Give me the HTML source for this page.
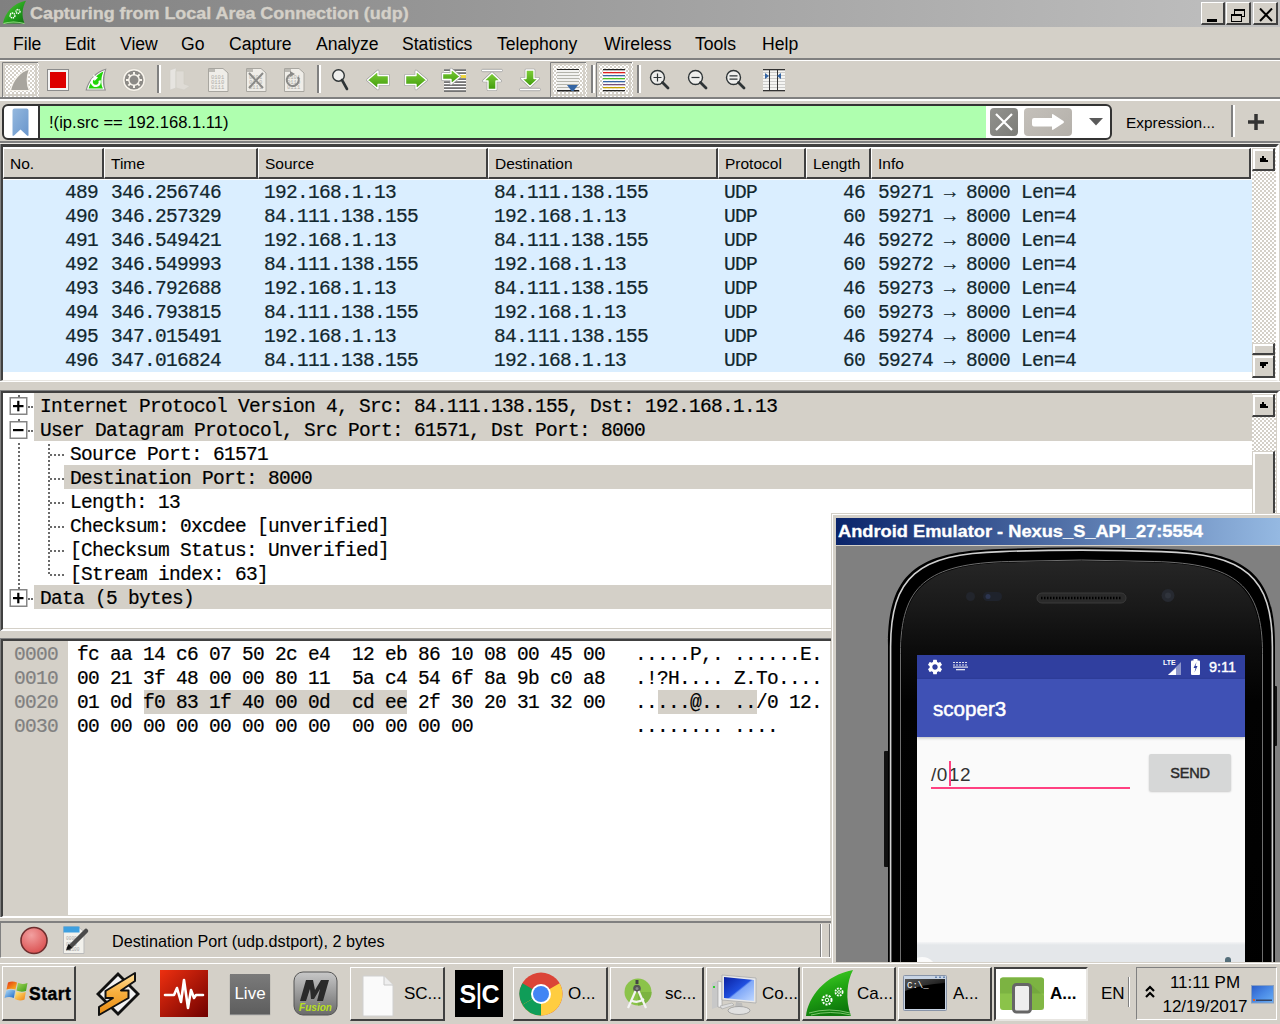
<!DOCTYPE html>
<html><head><meta charset="utf-8">
<style>
*{box-sizing:border-box;margin:0;padding:0}
html,body{width:1280px;height:1024px;overflow:hidden;background:#d4d0c8;font-family:"Liberation Sans",sans-serif;position:relative}
.a{position:absolute}
.mono{font-family:"Liberation Mono",monospace;font-size:19.5px;letter-spacing:-0.7px;white-space:pre;line-height:24px;padding-top:1px;-webkit-text-stroke:0.2px currentColor}
.sans{font-family:"Liberation Sans",sans-serif;white-space:pre}
.menu span{position:absolute;top:1px;font-size:17.6px;line-height:32px;color:#000}
.hdr{position:absolute;top:148px;height:31px;background:#d4d0c8;border-top:1px solid #fff;border-left:1px solid #fff;border-right:2px solid #404040;border-bottom:2px solid #404040;font-size:15.5px;line-height:30px;padding-left:6px;color:#000}
.row{position:absolute;left:3px;width:1249px;height:24px;background:#daeeff;color:#12272e}
.row span{position:absolute;top:1px}
.hl{background:#d4d0c8}
.check{background:repeating-conic-gradient(#d4d0c8 0% 25%,#fff 0% 50%) 0 0/4px 4px}
.sbtn{position:absolute;background:#d4d0c8;border-top:1px solid #d4d0c8;border-left:1px solid #d4d0c8;border-right:2px solid #404040;border-bottom:2px solid #404040;box-shadow:inset 2px 2px #fff}
.tb{position:absolute;background:#d4d0c8;border-top:1px solid #fff;border-left:1px solid #fff;border-right:2px solid #404040;border-bottom:2px solid #404040}
</style></head><body>

<!-- TITLE BAR -->
<div class="a" style="left:0;top:0;width:1280px;height:27px;background:linear-gradient(to right,#808080,#c0c0c0)"></div>
<div class="a sans" style="left:30px;top:0px;font-size:16px;font-weight:bold;line-height:27px;color:#d4d0c8;-webkit-text-stroke:0.35px #d4d0c8;transform-origin:0 0;transform:scaleX(1.12)">Capturing from Local Area Connection (udp)</div>
<!-- shark icon -->
<svg class="a" style="left:1px;top:0px" width="26" height="26" viewBox="0 0 26 26">
<defs><linearGradient id="sk" x1="0" y1="0" x2="1" y2="1"><stop offset="0" stop-color="#5cd23c"/><stop offset="0.6" stop-color="#1f9a1a"/><stop offset="1" stop-color="#0f6e10"/></linearGradient></defs>
<path d="M2 23.5 C4 13 12 3 25 0.8 C21 8 20.5 16 23.5 23.5 Z" fill="url(#sk)"/>
<path d="M2.5 23.5 Q12 20.5 23.5 23.5" stroke="#9be08a" stroke-width="1.2" fill="none"/>
<circle cx="11.5" cy="15.5" r="2.4" fill="none" stroke="#fff" stroke-width="1.5" stroke-dasharray="1.3 0.6"/>
<circle cx="17" cy="11.5" r="2" fill="none" stroke="#fff" stroke-width="1.4" stroke-dasharray="1.2 0.6"/>
</svg>
<!-- window buttons -->
<div class="tb" style="left:1201px;top:2px;width:24px;height:23px"><div class="a" style="left:5px;top:16px;width:10px;height:3px;background:#000"></div></div>
<div class="tb" style="left:1226px;top:2px;width:25px;height:23px">
 <div class="a" style="left:7px;top:6px;width:11px;height:8px;border:1px solid #000;border-top-width:2px"></div>
 <div class="a" style="left:4px;top:11px;width:11px;height:8px;border:1px solid #000;border-top-width:2px;background:#d4d0c8"></div>
</div>
<div class="tb" style="left:1253px;top:2px;width:25px;height:23px">
 <svg class="a" style="left:5px;top:5px" width="14" height="14" viewBox="0 0 14 14"><path d="M1 0.5 L13 13 M13 0.5 L1 13" stroke="#000" stroke-width="2"/></svg>
</div>
<!-- MENU -->
<div class="a menu" style="left:0;top:27px;width:1280px;height:32px">
<span style="left:13px">File</span><span style="left:65px">Edit</span><span style="left:120px">View</span><span style="left:181px">Go</span><span style="left:229px">Capture</span><span style="left:316px">Analyze</span><span style="left:402px">Statistics</span><span style="left:497px">Telephony</span><span style="left:604px">Wireless</span><span style="left:695px">Tools</span><span style="left:762px">Help</span>
</div>
<div class="a" style="left:0;top:58px;width:1280px;height:2px;background:#808080"></div>
<div class="a" style="left:0;top:60px;width:1280px;height:1px;background:#fff"></div>

<!-- TOOLBAR placeholder -->
<svg class="a" style="left:0;top:60px" width="800" height="38" viewBox="0 60 800 38">
<defs>
<pattern id="chk" width="4" height="4" patternUnits="userSpaceOnUse"><rect width="4" height="4" fill="#fff"/><rect width="2" height="2" fill="#d4d0c8"/><rect x="2" y="2" width="2" height="2" fill="#d4d0c8"/></pattern>
<linearGradient id="grn" x1="0" y1="0" x2="0" y2="1"><stop offset="0" stop-color="#7fcf3a"/><stop offset="1" stop-color="#3e9a0a"/></linearGradient>
</defs>
<!-- pressed button 1 -->
<rect x="2" y="62" width="37" height="35" fill="url(#chk)"/><path d="M4 64 H36 V95 H4 Z" fill="none" stroke="#d4d0c8" stroke-width="2"/><rect x="3" y="63" width="34" height="2" fill="#d4d0c8"/><rect x="3" y="63" width="2" height="32" fill="#d4d0c8"/><path d="M2.5 97 V62.5 H38" stroke="#808080" stroke-width="1" fill="none"/>
<path d="M10.5 90.5 C12.5 80 20 71.5 29.5 69 C27 75.5 26.5 84 29.5 90.5 Z" fill="#a8a59e" stroke="#f6f3ec" stroke-width="1.2"/>
<!-- red stop -->
<rect x="47.5" y="69.5" width="21" height="21" fill="#f4f4f4" stroke="#8c8c8c" stroke-width="1"/>
<rect x="50" y="72" width="16" height="16" fill="#dd0000"/>
<!-- green shark restart -->
<path d="M85.5 90.5 C88 80 96 71 106.5 68.5 C104 75 103.5 84 106 90.5 Z" fill="#8c8c8c"/>
<path d="M87 89.5 C89.5 80 97 72.5 105 70 C102.5 76 102 84 104.5 89.5 Z" fill="#fff"/>
<path d="M88.5 88.5 C91 80 97.5 74 103.5 71.5 C101 77 100.5 84 103 88.5 Z" fill="#22d40a"/>
<path d="M99.5 80.5 A4 4 0 1 1 95 78" stroke="#fff" stroke-width="2.2" fill="none"/>
<path d="M93 74.5 L98 77.5 L94.5 81 Z" fill="#fff"/>
<!-- gear -->
<circle cx="134" cy="80" r="10.4" fill="#8c8a86" stroke="#f8f4ec" stroke-width="1.8"/>
<circle cx="134" cy="80" r="11.5" fill="none" stroke="#c8c4bc" stroke-width="0.6"/>
<circle cx="134" cy="80" r="5.2" fill="none" stroke="#f8f4ec" stroke-width="1.5"/>
<g fill="#f8f4ec"><rect x="133" y="72" width="2" height="3" transform="rotate(0 134 80)"/><rect x="133" y="72" width="2" height="3" transform="rotate(45 134 80)"/><rect x="133" y="72" width="2" height="3" transform="rotate(90 134 80)"/><rect x="133" y="72" width="2" height="3" transform="rotate(135 134 80)"/><rect x="133" y="72" width="2" height="3" transform="rotate(180 134 80)"/><rect x="133" y="72" width="2" height="3" transform="rotate(225 134 80)"/><rect x="133" y="72" width="2" height="3" transform="rotate(270 134 80)"/><rect x="133" y="72" width="2" height="3" transform="rotate(315 134 80)"/></g>
<!-- separator -->
<rect x="157" y="65" width="2" height="28" fill="#808080"/><rect x="159" y="65" width="2" height="28" fill="#fff"/>
<!-- folder disabled -->
<path d="M170 70 L176 68 L176 88 L170 90 Z" fill="#e6e4e0" stroke="#d0cdc6" stroke-width="0.6"/>
<path d="M176 71 L184 71 L184 84 L190 86 L184 90 L176 88 Z" fill="#dedbd5" stroke="#cfccc5" stroke-width="0.6"/>
<!-- file icons disabled -->
<g stroke="#a8a6a0" stroke-width="1" fill="#efede8">
<path d="M208.5 68.5 H223 L228 73 V91.5 H208.5 Z"/>
<path d="M246.5 68.5 H261 L266 73 V91.5 H246.5 Z"/>
<path d="M284.5 68.5 H299 L304 73 V91.5 H284.5 Z"/>
</g>
<g fill="#bcbab4"><rect x="209" y="69" width="6" height="3"/><rect x="247" y="69" width="6" height="3"/><rect x="285" y="69" width="6" height="3"/></g>
<g font-family="Liberation Mono" font-size="5.5" fill="#b0aea8">
<text x="211" y="79">0101</text><text x="211" y="84">0110</text><text x="211" y="89">0111</text>
<text x="249" y="79">0101</text><text x="249" y="84">0110</text><text x="249" y="89">0111</text>
<text x="287" y="79">0101</text><text x="287" y="84">0110</text><text x="287" y="89">0111</text>
</g>
<path d="M249 73 L263 88 M263 73 L249 88" stroke="#8a8a88" stroke-width="2"/>
<path d="M298 77 A6 6 0 1 1 292 74" stroke="#8a8a88" stroke-width="2" fill="none"/>
<path d="M290 71 L295 74 L290 77 Z" fill="#8a8a88"/>
<!-- separator -->
<rect x="317" y="65" width="2" height="28" fill="#808080"/><rect x="319" y="65" width="2" height="28" fill="#fff"/>
<!-- magnifier -->
<circle cx="338.5" cy="75.5" r="5.8" fill="#eeeeec" stroke="#2e3436" stroke-width="1.4"/>
<path d="M342 80 L347 89" stroke="#2e3436" stroke-width="2.6" stroke-linecap="round"/>
<!-- left arrow -->
<path d="M367.5 80 L378 71 V75.5 H388.5 V84.5 H378 V89 Z" fill="none" stroke="#9a9a9a" stroke-width="2.6" stroke-linejoin="round"/><path d="M367.5 80 L378 71 V75.5 H388.5 V84.5 H378 V89 Z" fill="url(#grn)" stroke="#fff" stroke-width="1.4" stroke-linejoin="round"/>

<!-- right arrow -->
<path d="M426.5 80 L416 71 V75.5 H405.5 V84.5 H416 V89 Z" fill="none" stroke="#9a9a9a" stroke-width="2.6" stroke-linejoin="round"/><path d="M426.5 80 L416 71 V75.5 H405.5 V84.5 H416 V89 Z" fill="url(#grn)" stroke="#fff" stroke-width="1.4" stroke-linejoin="round"/>
<!-- goto packet -->
<rect x="444" y="69" width="22" height="23" fill="#fff"/><g fill="#1a1a1a"><rect x="444" y="69.5" width="22" height="1.1"/><rect x="444" y="72.5" width="22" height="1.1"/><rect x="444" y="75.5" width="22" height="1.1"/><rect x="444" y="78.5" width="22" height="1.1"/><rect x="444" y="81.5" width="22" height="1.1"/><rect x="444" y="84.5" width="22" height="1.1"/><rect x="444" y="87.5" width="22" height="1.1"/><rect x="444" y="90.5" width="22" height="1.1"/></g>
<rect x="458" y="75" width="8" height="3" fill="#f0d840"/>
<path d="M442.5 73.5 H451 V69 L460 76.5 L451 84 V79.5 H442.5 Z" fill="none" stroke="#9a9a9a" stroke-width="2.6" stroke-linejoin="round"/><path d="M442.5 73.5 H451 V69 L460 76.5 L451 84 V79.5 H442.5 Z" fill="url(#grn)" stroke="#fff" stroke-width="1.4" stroke-linejoin="round"/>
<!-- first -->
<rect x="481.5" y="69.3" width="21" height="2.4" rx="1.2" fill="#fff" stroke="#9a9a9a" stroke-width="0.8"/>
<path d="M492 73 L500.5 81 H496 V89.5 H488 V81 H483.5 Z" fill="none" stroke="#9a9a9a" stroke-width="2.6" stroke-linejoin="round"/><path d="M492 73 L500.5 81 H496 V89.5 H488 V81 H483.5 Z" fill="url(#grn)" stroke="#fff" stroke-width="1.4" stroke-linejoin="round"/>
<!-- last -->
<path d="M530 86.5 L538.5 78.5 H534 V70 H526 V78.5 H521.5 Z" fill="none" stroke="#9a9a9a" stroke-width="2.6" stroke-linejoin="round"/><path d="M530 86.5 L538.5 78.5 H534 V70 H526 V78.5 H521.5 Z" fill="url(#grn)" stroke="#fff" stroke-width="1.4" stroke-linejoin="round"/>
<rect x="519.5" y="88.3" width="21" height="2.4" rx="1.2" fill="#fff" stroke="#9a9a9a" stroke-width="0.8"/>
<!-- autoscroll pressed -->
<rect x="550" y="62" width="37" height="35" fill="url(#chk)"/><path d="M552 64 H584 V95 H552 Z" fill="none" stroke="#d4d0c8" stroke-width="2"/><rect x="551" y="63" width="34" height="2" fill="#d4d0c8"/><rect x="551" y="63" width="2" height="32" fill="#d4d0c8"/><path d="M550.5 97 V62.5 H586" stroke="#808080" stroke-width="1" fill="none"/>
<g fill="#222"><rect x="557" y="69" width="22" height="1.5"/><rect x="557" y="90" width="22" height="1.5"/></g>
<rect x="557" y="70" width="22" height="20" fill="#f2f2f0"/><g fill="#b4b4ac"><rect x="557" y="72" width="22" height="1"/><rect x="557" y="75" width="22" height="1"/><rect x="557" y="78" width="22" height="1"/><rect x="557" y="81" width="22" height="1"/><rect x="557" y="84" width="22" height="1"/><rect x="557" y="87" width="22" height="1"/></g>
<path d="M567 85 H578 L573.5 91 H571.5 Z" fill="#3465a4"/>
<!-- separator -->
<rect x="591" y="65" width="2" height="28" fill="#808080"/><rect x="593" y="65" width="2" height="28" fill="#fff"/>
<!-- colorize pressed -->
<rect x="596" y="62" width="37" height="35" fill="url(#chk)"/><path d="M598 64 H630 V95 H598 Z" fill="none" stroke="#d4d0c8" stroke-width="2"/><rect x="597" y="63" width="34" height="2" fill="#d4d0c8"/><rect x="597" y="63" width="2" height="32" fill="#d4d0c8"/><path d="M596.5 97 V62.5 H632" stroke="#808080" stroke-width="1" fill="none"/>
<rect x="603" y="70" width="22" height="20" fill="#fff" opacity="0.85"/><rect x="603" y="69" width="22" height="1.3" fill="#222"/>
<rect x="603" y="72" width="22" height="1.3" fill="#e02020"/>
<rect x="603" y="75" width="22" height="1.3" fill="#3465a4"/>
<rect x="603" y="78" width="22" height="1.3" fill="#4ec020"/>
<rect x="603" y="81" width="22" height="1.3" fill="#3465a4"/>
<rect x="603" y="84" width="22" height="1.3" fill="#75507b"/>
<rect x="603" y="87" width="22" height="1.3" fill="#c4a000"/>
<rect x="603" y="90" width="22" height="1.3" fill="#222"/>
<!-- separator -->
<rect x="637" y="65" width="2" height="28" fill="#808080"/><rect x="639" y="65" width="2" height="28" fill="#fff"/>
<!-- zooms -->
<g stroke="#2e3436">
<circle cx="657.5" cy="77.5" r="7" fill="#eeeeec" stroke-width="1.4"/>
<path d="M662.5 82.5 L668 88" stroke-width="2.8" stroke-linecap="round"/>
<path d="M653.5 77.5 H661.5 M657.5 73.5 V81.5" stroke-width="1.2"/>
<circle cx="695.5" cy="77.5" r="7" fill="#eeeeec" stroke-width="1.4"/>
<path d="M700.5 82.5 L706 88" stroke-width="2.8" stroke-linecap="round"/>
<path d="M691.5 77.5 H699.5" stroke-width="1.2"/>
<circle cx="733.5" cy="77.5" r="7" fill="#eeeeec" stroke-width="1.4"/>
<path d="M738.5 82.5 L744 88" stroke-width="2.8" stroke-linecap="round"/>
<path d="M729.5 75.8 H737.5 M729.5 79.2 H737.5" stroke-width="1.2"/>
</g>
<!-- resize columns -->
<g fill="#f4f4f2"><rect x="763" y="69" width="22" height="22"/></g>
<g fill="#bbb"><rect x="763" y="72" width="22" height="0.7"/><rect x="763" y="75" width="22" height="0.7"/><rect x="763" y="78" width="22" height="0.7"/><rect x="763" y="81" width="22" height="0.7"/><rect x="763" y="84" width="22" height="0.7"/><rect x="763" y="87" width="22" height="0.7"/></g>
<g fill="#333"><rect x="763" y="69" width="22" height="1.3"/><rect x="763" y="90" width="22" height="1.3"/><rect x="769" y="69" width="1" height="22"/><rect x="777" y="69" width="1" height="22"/></g>
<path d="M765 73 L769 76 L765 79 Z M781 73 L777 76 L781 79 Z" fill="#3465a4"/>
</svg>


<div class="a" style="left:0;top:97px;width:1280px;height:2px;background:#808080"></div>
<div class="a" style="left:0;top:99px;width:1280px;height:2px;background:#fff"></div>

<!-- FILTER BAR -->
<div class="a" style="left:2px;top:104px;width:1110px;height:36px;border:2px solid #333;border-radius:6px;background:#fff;overflow:hidden">
 <div class="a" style="left:34px;top:0;width:948px;height:32px;background:#afffaf;border-left:2px solid #333"></div>
 <svg class="a" style="left:8px;top:2px" width="18" height="29" viewBox="0 0 18 29"><defs><linearGradient id="bm" x1="0" y1="0" x2="1" y2="1"><stop offset="0" stop-color="#94b8de"/><stop offset="1" stop-color="#6a96cc"/></linearGradient></defs><path d="M0.5 2.5 Q0.5 0.5 2.5 0.5 L14.5 0.5 Q16.5 0.5 16.5 2.5 L16.5 27 Q16.5 28.5 15 27.5 L8.5 21.5 L2 27.5 Q0.5 28.5 0.5 27 Z" fill="url(#bm)"/></svg>
 <div class="a sans" style="left:45px;top:0;font-size:16.6px;line-height:33px;color:#000">!(ip.src == 192.168.1.11)</div>
 <div class="a" style="left:986px;top:2px;width:28px;height:28px;background:linear-gradient(135deg,#92928e,#7c7c78);border-radius:4px"></div>
 <svg class="a" style="left:990px;top:6px" width="20" height="20" viewBox="0 0 20 20"><path d="M2 2 L18 18 M18 2 L2 18" stroke="#fff" stroke-width="2.2"/></svg>
 <div class="a" style="left:1020px;top:2px;width:48px;height:28px;background:linear-gradient(135deg,#c4c0ba,#b4b0aa);border-radius:4px"></div>
 <svg class="a" style="left:1026px;top:6px" width="36" height="20" viewBox="0 0 36 20"><path d="M4 6 H22 V3 Q22 1.5 23.5 2.5 L33.5 9 Q34.5 10 33.5 11 L23.5 17.5 Q22 18.5 22 17 V14.4 H4 Q2 14.4 2 12.4 V8 Q2 6 4 6 Z" fill="#fff"/></svg>
 <svg class="a" style="left:1085px;top:12px" width="14" height="8" viewBox="0 0 14 8"><path d="M0 0 L14 0 L7 7.5 Z" fill="#5a5a5a"/></svg>
</div>
<div class="a sans" style="left:1126px;top:105px;font-size:15.4px;line-height:36px;color:#000">Expression...</div>
<div class="a" style="left:1231px;top:105px;width:2px;height:32px;background:#808080"></div>
<div class="a" style="left:1233px;top:105px;width:2px;height:32px;background:#fff"></div>
<svg class="a" style="left:1247px;top:113px" width="18" height="18" viewBox="0 0 18 18"><path d="M9 1 V17 M1 9 H17" stroke="#333" stroke-width="3.5"/></svg>
<div class="a" style="left:0;top:141px;width:1280px;height:2px;background:#808080"></div>
<div class="a" style="left:0;top:143px;width:1280px;height:1px;background:#ebe9e5"></div>

<!-- PACKET LIST -->
<div class="a" style="left:0;top:144px;width:1279px;height:237px;border-top:3px solid #404040;border-left:3px solid #404040;border-bottom:1px solid #e8e6e2;border-right:3px solid #fff;background:#fff"></div>
<div class="a" style="left:0;top:144px;width:1px;height:237px;background:#808080"></div>
<div class="hdr sans" style="left:3px;width:101px">No.</div>
<div class="hdr sans" style="left:104px;width:154px">Time</div>
<div class="hdr sans" style="left:258px;width:230px">Source</div>
<div class="hdr sans" style="left:488px;width:230px">Destination</div>
<div class="hdr sans" style="left:718px;width:88px">Protocol</div>
<div class="hdr sans" style="left:806px;width:65px">Length</div>
<div class="hdr sans" style="left:871px;width:380px">Info</div>
<div class="row mono" style="top:180px"><span style="left:62px">489</span><span style="left:108px">346.256746</span><span style="left:261px">192.168.1.13</span><span style="left:491px">84.111.138.155</span><span style="left:721px">UDP</span><span style="left:840px">46</span><span style="left:875px">59271 → 8000 Len=4</span></div>
<div class="row mono" style="top:204px"><span style="left:62px">490</span><span style="left:108px">346.257329</span><span style="left:261px">84.111.138.155</span><span style="left:491px">192.168.1.13</span><span style="left:721px">UDP</span><span style="left:840px">60</span><span style="left:875px">59271 → 8000 Len=4</span></div>
<div class="row mono" style="top:228px"><span style="left:62px">491</span><span style="left:108px">346.549421</span><span style="left:261px">192.168.1.13</span><span style="left:491px">84.111.138.155</span><span style="left:721px">UDP</span><span style="left:840px">46</span><span style="left:875px">59272 → 8000 Len=4</span></div>
<div class="row mono" style="top:252px"><span style="left:62px">492</span><span style="left:108px">346.549993</span><span style="left:261px">84.111.138.155</span><span style="left:491px">192.168.1.13</span><span style="left:721px">UDP</span><span style="left:840px">60</span><span style="left:875px">59272 → 8000 Len=4</span></div>
<div class="row mono" style="top:276px"><span style="left:62px">493</span><span style="left:108px">346.792688</span><span style="left:261px">192.168.1.13</span><span style="left:491px">84.111.138.155</span><span style="left:721px">UDP</span><span style="left:840px">46</span><span style="left:875px">59273 → 8000 Len=4</span></div>
<div class="row mono" style="top:300px"><span style="left:62px">494</span><span style="left:108px">346.793815</span><span style="left:261px">84.111.138.155</span><span style="left:491px">192.168.1.13</span><span style="left:721px">UDP</span><span style="left:840px">60</span><span style="left:875px">59273 → 8000 Len=4</span></div>
<div class="row mono" style="top:324px"><span style="left:62px">495</span><span style="left:108px">347.015491</span><span style="left:261px">192.168.1.13</span><span style="left:491px">84.111.138.155</span><span style="left:721px">UDP</span><span style="left:840px">46</span><span style="left:875px">59274 → 8000 Len=4</span></div>
<div class="row mono" style="top:348px"><span style="left:62px">496</span><span style="left:108px">347.016824</span><span style="left:261px">84.111.138.155</span><span style="left:491px">192.168.1.13</span><span style="left:721px">UDP</span><span style="left:840px">60</span><span style="left:875px">59274 → 8000 Len=4</span></div>
<div class="a check" style="left:1252px;top:148px;width:24px;height:230px"></div>
<div class="sbtn" style="left:1252px;top:148px;width:23px;height:23px"><svg class="a" style="left:7px;top:7px" width="8" height="6"><path d="M2 0 H4 V2 H6 V4 H8 V6 H0 V2 H2 Z" fill="#000"/></svg></div>
<div class="sbtn" style="left:1252px;top:343px;width:23px;height:12px"></div>
<div class="sbtn" style="left:1252px;top:355px;width:23px;height:23px"><svg class="a" style="left:7px;top:6px" width="8" height="6"><path d="M0 0 H8 V2 H6 V4 H4 V6 H2 V4 H0 Z" fill="#000"/></svg></div>

<!-- DETAILS -->
<div class="a" style="left:0;top:381px;width:1280px;height:1px;background:#fff"></div>
<div class="a" style="left:0;top:390px;width:1280px;height:241px;border-top:3px solid #404040;border-left:3px solid #404040;border-bottom:2px solid #fff;border-right:3px solid #fff;background:#fff;box-shadow:inset -1px -1px #d4d0c8"></div><div class="a" style="left:0;top:390px;width:1px;height:241px;background:#808080"></div>
<div class="a" style="left:0;top:390px;width:1280px;height:1px;background:#808080"></div>
<div class="a" style="left:34px;top:393px;width:1218px;height:24px;background:#d4d0c8"></div>
<div class="a mono" style="padding-top:2px;left:40px;top:393px;color:#000">Internet Protocol Version 4, Src: 84.111.138.155, Dst: 192.168.1.13</div>
<div class="a" style="left:34px;top:417px;width:1218px;height:24px;background:#d4d0c8"></div>
<div class="a mono" style="padding-top:2px;left:40px;top:417px;color:#000">User Datagram Protocol, Src Port: 61571, Dst Port: 8000</div>
<div class="a mono" style="padding-top:2px;left:70px;top:441px;color:#000">Source Port: 61571</div>
<div class="a" style="left:64px;top:465px;width:1188px;height:24px;background:#d4d0c8"></div>
<div class="a mono" style="padding-top:2px;left:70px;top:465px;color:#000">Destination Port: 8000</div>
<div class="a mono" style="padding-top:2px;left:70px;top:489px;color:#000">Length: 13</div>
<div class="a mono" style="padding-top:2px;left:70px;top:513px;color:#000">Checksum: 0xcdee [unverified]</div>
<div class="a mono" style="padding-top:2px;left:70px;top:537px;color:#000">[Checksum Status: Unverified]</div>
<div class="a mono" style="padding-top:2px;left:70px;top:561px;color:#000">[Stream index: 63]</div>
<div class="a" style="left:34px;top:585px;width:1218px;height:24px;background:#d4d0c8"></div>
<div class="a mono" style="padding-top:2px;left:40px;top:585px;color:#000">Data (5 bytes)</div>
<svg class="a" style="left:0;top:393px" width="70" height="235" viewBox="0 393 70 235"><g fill="#6a6a6a"><rect x="18" y="395" width="2" height="2"/><rect x="18" y="419" width="2" height="2"/><rect x="18" y="443" width="2" height="2"/><rect x="18" y="447" width="2" height="2"/><rect x="18" y="451" width="2" height="2"/><rect x="18" y="455" width="2" height="2"/><rect x="18" y="459" width="2" height="2"/><rect x="18" y="463" width="2" height="2"/><rect x="18" y="467" width="2" height="2"/><rect x="18" y="471" width="2" height="2"/><rect x="18" y="475" width="2" height="2"/><rect x="18" y="479" width="2" height="2"/><rect x="18" y="483" width="2" height="2"/><rect x="18" y="487" width="2" height="2"/><rect x="18" y="491" width="2" height="2"/><rect x="18" y="495" width="2" height="2"/><rect x="18" y="499" width="2" height="2"/><rect x="18" y="503" width="2" height="2"/><rect x="18" y="507" width="2" height="2"/><rect x="18" y="511" width="2" height="2"/><rect x="18" y="515" width="2" height="2"/><rect x="18" y="519" width="2" height="2"/><rect x="18" y="523" width="2" height="2"/><rect x="18" y="527" width="2" height="2"/><rect x="18" y="531" width="2" height="2"/><rect x="18" y="535" width="2" height="2"/><rect x="18" y="539" width="2" height="2"/><rect x="18" y="543" width="2" height="2"/><rect x="18" y="547" width="2" height="2"/><rect x="18" y="551" width="2" height="2"/><rect x="18" y="555" width="2" height="2"/><rect x="18" y="559" width="2" height="2"/><rect x="18" y="563" width="2" height="2"/><rect x="18" y="567" width="2" height="2"/><rect x="18" y="571" width="2" height="2"/><rect x="18" y="575" width="2" height="2"/><rect x="18" y="579" width="2" height="2"/><rect x="18" y="583" width="2" height="2"/><rect x="18" y="587" width="2" height="2"/><rect x="48" y="444" width="2" height="2"/><rect x="48" y="448" width="2" height="2"/><rect x="48" y="452" width="2" height="2"/><rect x="48" y="456" width="2" height="2"/><rect x="48" y="460" width="2" height="2"/><rect x="48" y="464" width="2" height="2"/><rect x="48" y="468" width="2" height="2"/><rect x="48" y="472" width="2" height="2"/><rect x="48" y="476" width="2" height="2"/><rect x="48" y="480" width="2" height="2"/><rect x="48" y="484" width="2" height="2"/><rect x="48" y="488" width="2" height="2"/><rect x="48" y="492" width="2" height="2"/><rect x="48" y="496" width="2" height="2"/><rect x="48" y="500" width="2" height="2"/><rect x="48" y="504" width="2" height="2"/><rect x="48" y="508" width="2" height="2"/><rect x="48" y="512" width="2" height="2"/><rect x="48" y="516" width="2" height="2"/><rect x="48" y="520" width="2" height="2"/><rect x="48" y="524" width="2" height="2"/><rect x="48" y="528" width="2" height="2"/><rect x="48" y="532" width="2" height="2"/><rect x="48" y="536" width="2" height="2"/><rect x="48" y="540" width="2" height="2"/><rect x="48" y="544" width="2" height="2"/><rect x="48" y="548" width="2" height="2"/><rect x="48" y="552" width="2" height="2"/><rect x="48" y="556" width="2" height="2"/><rect x="48" y="560" width="2" height="2"/><rect x="48" y="564" width="2" height="2"/><rect x="48" y="568" width="2" height="2"/><rect x="48" y="572" width="2" height="2"/><rect x="50" y="454" width="2" height="2"/><rect x="54" y="454" width="2" height="2"/><rect x="58" y="454" width="2" height="2"/><rect x="62" y="454" width="2" height="2"/><rect x="50" y="478" width="2" height="2"/><rect x="54" y="478" width="2" height="2"/><rect x="58" y="478" width="2" height="2"/><rect x="62" y="478" width="2" height="2"/><rect x="50" y="502" width="2" height="2"/><rect x="54" y="502" width="2" height="2"/><rect x="58" y="502" width="2" height="2"/><rect x="62" y="502" width="2" height="2"/><rect x="50" y="526" width="2" height="2"/><rect x="54" y="526" width="2" height="2"/><rect x="58" y="526" width="2" height="2"/><rect x="62" y="526" width="2" height="2"/><rect x="50" y="550" width="2" height="2"/><rect x="54" y="550" width="2" height="2"/><rect x="58" y="550" width="2" height="2"/><rect x="62" y="550" width="2" height="2"/><rect x="50" y="574" width="2" height="2"/><rect x="54" y="574" width="2" height="2"/><rect x="58" y="574" width="2" height="2"/><rect x="62" y="574" width="2" height="2"/><rect x="28" y="406" width="2" height="2"/><rect x="31" y="406" width="2" height="2"/><rect x="28" y="430" width="2" height="2"/><rect x="31" y="430" width="2" height="2"/><rect x="28" y="598" width="2" height="2"/><rect x="31" y="598" width="2" height="2"/></g><rect x="10.25" y="397.75" width="16.5" height="16.5" fill="#fff" stroke="#858585" stroke-width="1.5"/><rect x="13" y="405" width="10.5" height="2.2" fill="#000"/><rect x="17.2" y="400.8" width="2.2" height="10.5" fill="#000"/><rect x="10.25" y="421.75" width="16.5" height="16.5" fill="#fff" stroke="#858585" stroke-width="1.5"/><rect x="13" y="429" width="10.5" height="2.2" fill="#000"/><rect x="10.25" y="589.75" width="16.5" height="16.5" fill="#fff" stroke="#858585" stroke-width="1.5"/><rect x="13" y="597" width="10.5" height="2.2" fill="#000"/><rect x="17.2" y="592.8" width="2.2" height="10.5" fill="#000"/></svg>
<div class="a check" style="left:1252px;top:394px;width:24px;height:234px"></div>
<div class="sbtn" style="left:1252px;top:394px;width:23px;height:23px"><svg class="a" style="left:7px;top:7px" width="8" height="6"><path d="M2 0 H4 V2 H6 V4 H8 V6 H0 V2 H2 Z" fill="#000"/></svg></div>
<div class="sbtn" style="left:1252px;top:451px;width:23px;height:150px"></div>
<div class="sbtn" style="left:1252px;top:604px;width:23px;height:23px"><svg class="a" style="left:7px;top:6px" width="8" height="6"><path d="M0 0 H8 V2 H6 V4 H4 V6 H2 V4 H0 Z" fill="#000"/></svg></div>

<!-- HEX -->
<div class="a" style="left:0;top:638px;width:832px;height:280px;border-top:3px solid #404040;border-left:3px solid #404040;border-bottom:2px solid #fff;border-right:1px solid #fff;background:#fff;box-shadow:inset -1px -1px #d4d0c8"></div><div class="a" style="left:0;top:638px;width:1px;height:280px;background:#808080"></div>
<div class="a" style="left:0;top:638px;width:832px;height:1px;background:#808080"></div>
<div class="a" style="left:3px;top:641px;width:65px;height:274px;background:#d4d0c8"></div>
<div class="a" style="left:144px;top:690px;width:263px;height:24px;background:#d4d0c8"></div>
<div class="a" style="left:658px;top:690px;width:99px;height:24px;background:#d4d0c8"></div>
<div class="a mono" style="padding-top:2px;left:14px;top:641px;color:#808080">0000</div>
<div class="a mono" style="padding-top:2px;left:77px;top:641px;color:#000">fc aa 14 c6 07 50 2c e4  12 eb 86 10 08 00 45 00</div>
<div class="a mono" style="padding-top:2px;left:635px;top:641px;color:#000">.....P,. ......E.</div>
<div class="a mono" style="padding-top:2px;left:14px;top:665px;color:#808080">0010</div>
<div class="a mono" style="padding-top:2px;left:77px;top:665px;color:#000">00 21 3f 48 00 00 80 11  5a c4 54 6f 8a 9b c0 a8</div>
<div class="a mono" style="padding-top:2px;left:635px;top:665px;color:#000">.!?H.... Z.To....</div>
<div class="a mono" style="padding-top:2px;left:14px;top:689px;color:#808080">0020</div>
<div class="a mono" style="padding-top:2px;left:77px;top:689px;color:#000">01 0d f0 83 1f 40 00 0d  cd ee 2f 30 20 31 32 00</div>
<div class="a mono" style="padding-top:2px;left:635px;top:689px;color:#000">.....@.. ../0 12.</div>
<div class="a mono" style="padding-top:2px;left:14px;top:713px;color:#808080">0030</div>
<div class="a mono" style="padding-top:2px;left:77px;top:713px;color:#000">00 00 00 00 00 00 00 00  00 00 00 00</div>
<div class="a mono" style="padding-top:2px;left:635px;top:713px;color:#000">........ ....</div>

<!-- STATUS -->
<div class="a" style="left:0;top:917px;width:1280px;height:1px;background:#fff"></div>
<div class="a" style="left:0;top:921px;width:836px;height:37px;border-top:2px solid #808080;border-left:1px solid #808080;border-bottom:1px solid #fff"></div>
<svg class="a" style="left:18px;top:924px" width="72" height="32" viewBox="18 924 72 32">
<defs><radialGradient id="rc" cx="0.4" cy="0.3" r="0.8"><stop offset="0" stop-color="#f2a0a0"/><stop offset="1" stop-color="#d84848"/></radialGradient></defs>
<circle cx="34" cy="940.5" r="13" fill="url(#rc)" stroke="#6e2e2e" stroke-width="1.6"/>
<path d="M63.5 926.5 H78 L84 932 V953.5 H63.5 Z" fill="#f2f1ec" stroke="#bbb" stroke-width="1"/>
<rect x="63.5" y="926.5" width="16" height="6" fill="#3ea0e0"/>
<g font-family="Liberation Mono" font-size="4.5" fill="#a8a8a8"><text x="66" y="940">0000</text><text x="66" y="946">0010</text><text x="66" y="951">01100</text></g>
<path d="M69 948 L86 931" stroke="#4a4a4a" stroke-width="4.5" stroke-linecap="round"/>
<path d="M66 950.5 L68.5 944 L72 947.5 Z" fill="#111"/>
</svg>
<div class="a sans" style="left:112px;top:924px;font-size:16.2px;line-height:34px;color:#000">Destination Port (udp.dstport), 2 bytes</div>
<div class="a" style="left:820px;top:924px;width:1px;height:33px;background:#808080"></div>
<div class="a" style="left:821px;top:924px;width:1px;height:33px;background:#fff"></div>
<div class="a" style="left:829px;top:924px;width:1px;height:33px;background:#808080"></div>
<div class="a" style="left:830px;top:924px;width:1px;height:33px;background:#fff"></div>


<!-- TASKBAR -->
<div class="a" style="left:0;top:962px;width:1280px;height:62px;background:#d4d0c8;border-top:1px solid #d4d0c8"></div>
<div class="a" style="left:0;top:963px;width:1280px;height:1px;background:#fff"></div>
<!-- start -->
<div class="tb" style="left:2px;top:966px;width:74px;height:55px"></div>
<svg class="a" style="left:4px;top:980px" width="24" height="24" viewBox="0 0 24 24">
<defs>
<linearGradient id="w1" x1="0" y1="0" x2="1" y2="1"><stop offset="0" stop-color="#e83010"/><stop offset="1" stop-color="#f8c020"/></linearGradient>
<linearGradient id="w2" x1="0" y1="0" x2="1" y2="1"><stop offset="0" stop-color="#a8d860"/><stop offset="1" stop-color="#3a9a10"/></linearGradient>
<linearGradient id="w3" x1="0" y1="0" x2="1" y2="1"><stop offset="0" stop-color="#b8e0f8"/><stop offset="1" stop-color="#1868c8"/></linearGradient>
<linearGradient id="w4" x1="0" y1="0" x2="1" y2="1"><stop offset="0" stop-color="#fff080"/><stop offset="1" stop-color="#f08010"/></linearGradient>
</defs>
<path d="M4 2.5 Q8 0.5 13 2.5 L11.5 9.5 Q7 8 2.5 9.5 Z" fill="url(#w1)"/>
<path d="M14 2.8 Q18 5 23.5 3 L22 11 Q17 12.5 12.5 10.5 Z" fill="url(#w2)"/>
<path d="M2.3 10.5 Q7 9 11.2 10.5 L9.8 18 Q5 16 0.5 18 Z" fill="url(#w3)"/>
<path d="M12.3 11.5 Q17 13.5 21.8 12 L20.5 19.5 Q15.5 21.5 10.8 19 Z" fill="url(#w4)"/>
</svg>
<div class="a sans" style="left:29px;top:967px;font-size:17.5px;font-weight:bold;letter-spacing:0.5px;-webkit-text-stroke:0.4px #000;line-height:54px;color:#000">Start</div>
<!-- winamp -->
<svg class="a" style="left:95px;top:971px" width="46" height="46" viewBox="0 0 46 46">
<path d="M23 1 L45 23 L23 45 L1 23 Z" fill="#111"/>
<path d="M23 5 L41 23 L23 41 L5 23 Z" fill="#f2f2f2"/>
<defs><linearGradient id="wa" x1="0" y1="0" x2="0" y2="1"><stop offset="0" stop-color="#fde0a0"/><stop offset="0.45" stop-color="#f8b040"/><stop offset="1" stop-color="#e88a10"/></linearGradient></defs><path d="M40 2 V10 L26 19.5 H33.5 V27 L4 44 V36 L18 27 H10.5 V20 Z" fill="url(#wa)" stroke="#111" stroke-width="2" stroke-linejoin="round"/>
</svg>
<!-- red waveform -->
<svg class="a" style="left:160px;top:970px" width="48" height="47" viewBox="0 0 48 47">
<defs><linearGradient id="rw" x1="0" y1="0" x2="1" y2="1"><stop offset="0" stop-color="#ee3010"/><stop offset="1" stop-color="#700000"/></linearGradient></defs>
<rect width="48" height="47" fill="url(#rw)"/>
<path d="M5 25 H14 L17 18 L21 32 L24 10 L28 38 L31 20 L34 28 L36 25 H43" stroke="#fff" stroke-width="2.6" fill="none" stroke-linejoin="round" stroke-linecap="round"/>
</svg>
<!-- live -->
<div class="a" style="left:230px;top:974px;width:40px;height:40px;background:linear-gradient(#7a7a7a,#5e5e5e);box-shadow:0 1px 1px #888"></div>
<div class="a sans" style="left:230px;top:974px;width:40px;text-align:center;font-size:17px;line-height:40px;color:#fff">Live</div>
<!-- M fusion -->
<svg class="a" style="left:293px;top:971px" width="45" height="45" viewBox="0 0 45 45">
<defs><linearGradient id="mf" x1="0" y1="0" x2="0" y2="1"><stop offset="0" stop-color="#c8c8c8"/><stop offset="1" stop-color="#6a6a6a"/></linearGradient></defs>
<rect x="1" y="1" width="43" height="43" rx="9" fill="url(#mf)" stroke="#555" stroke-width="1"/>
<path d="M7 30 L13 9 H20 L22 19 L28 9 H36 L30 30 H24 L27 18 L21 28 H18 L17 18 L13 30 Z" fill="#2a2a2a"/>
<text x="22.5" y="40" font-family="Liberation Sans" font-weight="bold" font-style="italic" font-size="10" fill="#b8e020" text-anchor="middle">Fusion</text>
</svg>
<!-- SC doc button -->
<div class="tb" style="left:350px;top:967px;width:95px;height:54px"></div>
<svg class="a" style="left:362px;top:975px" width="32" height="42" viewBox="0 0 32 42">
<path d="M1 1 H22 L31 10 V41 H1 Z" fill="#fafafa" stroke="#d0d0d0" stroke-width="1"/>
<path d="M22 1 V10 H31" fill="#eee" stroke="#c8c8c8" stroke-width="1"/>
</svg>
<div class="a sans" style="left:404px;top:967px;font-size:17px;line-height:53px;color:#000">SC...</div>
<!-- SC black -->
<div class="a" style="left:455px;top:970px;width:48px;height:47px;background:#000"></div>
<div class="a sans" style="left:455px;top:970px;width:48px;text-align:center;font-size:25px;font-weight:bold;line-height:47px;color:#fff;letter-spacing:-1px">S<span style="font-weight:normal;font-size:28px">|</span>C</div>
<!-- chrome button -->
<div class="tb" style="left:513px;top:967px;width:95px;height:54px"></div>
<svg class="a" style="left:519px;top:972px" width="44" height="44" viewBox="0 0 44 44">
<circle cx="22" cy="22" r="21.5" fill="#db4437"/>
<path d="M22 22 L3.4 32.75 A21.5 21.5 0 0 1 3.4 11.25 Z" fill="#0f9d58"/>
<path d="M22 22 L40.6 11.25 A21.5 21.5 0 0 1 22 43.5 L22 43.5 A21.5 21.5 0 0 1 3.4 32.75 Z" fill="#ffcd40"/>
<path d="M22 22 L22 43.5 A21.5 21.5 0 0 1 3.4 32.75 Z" fill="#0f9d58"/>
<circle cx="22" cy="22" r="10" fill="#fff"/>
<circle cx="22" cy="22" r="8" fill="#4285f4"/>
</svg>
<div class="a sans" style="left:568px;top:967px;font-size:17px;line-height:53px;color:#000">O...</div>
<!-- android studio button -->
<div class="tb" style="left:610px;top:967px;width:94px;height:54px"></div>
<svg class="a" style="left:623px;top:978px" width="30" height="32" viewBox="0 0 30 32">
<circle cx="15" cy="14" r="13.5" fill="#8bc34a"/>
<path d="M15 14 L28.5 14 A13.5 13.5 0 0 1 15 27.5 Z" fill="#7cb342"/>
<rect x="12.5" y="2" width="3" height="4" fill="#444"/>
<circle cx="14" cy="10.5" r="3.8" fill="#555"/>
<circle cx="14" cy="10.5" r="1.5" fill="#888"/>
<path d="M12.5 13 L5 30 M15.5 13 L23 30 M7.5 22 Q14 26 21 21" stroke="#f4f4f4" stroke-width="2.2" fill="none"/>
</svg>
<div class="a sans" style="left:665px;top:967px;font-size:17px;line-height:53px;color:#000">sc...</div>
<!-- computer button -->
<div class="tb" style="left:706px;top:967px;width:94px;height:54px"></div>
<svg class="a" style="left:710px;top:973px" width="50" height="44" viewBox="0 0 50 44">
<defs><linearGradient id="scr" x1="0" y1="0" x2="1" y2="1"><stop offset="0" stop-color="#0a20a0"/><stop offset="0.5" stop-color="#2050e0"/><stop offset="0.55" stop-color="#80a8f8"/><stop offset="1" stop-color="#c0d8ff"/></linearGradient></defs>
<path d="M2 10 L8 8 V34 L2 36 Z" fill="#c8c8c8"/>
<path d="M8 8 L12 9 V35 L8 34 Z" fill="#f0f0f0" stroke="#999" stroke-width="0.6"/>
<rect x="3" y="13" width="2" height="2" fill="#30d030"/>
<path d="M12 2 L46 5 V30 L12 27 Z" fill="#e8e8e8" stroke="#aaa" stroke-width="0.8"/>
<path d="M14 4 L44 7 V28 L14 25 Z" fill="url(#scr)"/>
<path d="M26 29 L32 30 L33 35 L25 35 Z" fill="#bbb"/>
<ellipse cx="29" cy="37.5" rx="11" ry="4" fill="#e0e0e0" stroke="#999" stroke-width="0.8"/>
<path d="M10 33 L22 30 L24 32 L12 36 Z" fill="#ddd" stroke="#999" stroke-width="0.5"/>
</svg>
<div class="a sans" style="left:762px;top:967px;font-size:17px;line-height:53px;color:#000">Co...</div>
<!-- capture button -->
<div class="tb" style="left:802px;top:967px;width:94px;height:54px"></div>
<svg class="a" style="left:805px;top:969px" width="50" height="48" viewBox="0 0 50 48">
<defs><linearGradient id="tsk" x1="0" y1="0" x2="0.3" y2="1"><stop offset="0" stop-color="#4ad82a"/><stop offset="0.5" stop-color="#22a814"/><stop offset="1" stop-color="#0e7a0c"/></linearGradient></defs>
<path d="M1 47 C3 28 20 6 48 1 C42 12 40 30 46 47 Z" fill="url(#tsk)"/>
<path d="M4 44 Q24 38 45 44 M6 46 Q25 41 46 46" stroke="#b8f0a0" stroke-width="0.8" fill="none" opacity="0.8"/>
<circle cx="22" cy="31" r="4.5" fill="none" stroke="#fff" stroke-width="2" stroke-dasharray="2 1.2"/>
<circle cx="22" cy="31" r="1.8" fill="none" stroke="#fff" stroke-width="1"/>
<circle cx="34" cy="23" r="3.6" fill="none" stroke="#fff" stroke-width="1.8" stroke-dasharray="1.8 1.1"/>
<circle cx="34" cy="23" r="1.4" fill="none" stroke="#fff" stroke-width="0.9"/>
</svg>
<div class="a sans" style="left:857px;top:967px;font-size:17px;line-height:53px;color:#000">Ca...</div>
<!-- cmd button -->
<div class="tb" style="left:898px;top:967px;width:94px;height:54px"></div>
<svg class="a" style="left:903px;top:975px" width="44" height="36" viewBox="0 0 44 36">
<defs><linearGradient id="cmdg" x1="0" y1="0" x2="1" y2="0.6"><stop offset="0" stop-color="#555"/><stop offset="0.8" stop-color="#222"/><stop offset="1" stop-color="#000"/></linearGradient></defs>
<rect x="0.5" y="0.5" width="43" height="35" rx="1" fill="#c8d4e4" stroke="#8894a8" stroke-width="1"/>
<rect x="2" y="4" width="40" height="30" fill="#000"/>
<path d="M2 4 H42 V8 Q20 9 2 16 Z" fill="url(#cmdg)"/>
<rect x="32" y="1.5" width="2" height="1.5" fill="#6a86b0"/><rect x="36" y="1.5" width="2" height="1.5" fill="#6a86b0"/><rect x="40" y="1.5" width="2" height="1.5" fill="#6a86b0"/>
<text x="4" y="13" font-family="Liberation Mono" font-size="9" fill="#fff">C:\_</text>
</svg>
<div class="a sans" style="left:953px;top:967px;font-size:17px;line-height:53px;color:#000">A...</div>
<!-- active android button -->
<div class="a" style="left:994px;top:967px;width:94px;height:54px;background:#fff;border-top:2px solid #404040;border-left:2px solid #404040;border-bottom:2px solid #e8e6e2;border-right:2px solid #e8e6e2"></div>
<svg class="a" style="left:1000px;top:977px" width="46" height="38" viewBox="0 0 46 38">
<rect x="0" y="0.5" width="44" height="32.5" rx="3" fill="#8bc34a"/>
<path d="M3 0.5 H41 Q44 0.5 44 3.5 V16.5 H0 V3.5 Q0 0.5 3 0.5 Z" fill="#7cb342"/>
<path d="M30 6 L44 19 V33 H30 Z" fill="#000" opacity="0.06"/>
<rect x="13.5" y="7.5" width="17" height="27.5" rx="3" fill="#eeeeee" stroke="#666" stroke-width="3"/>
</svg>
<div class="a sans" style="left:1050px;top:967px;font-size:17px;font-weight:bold;line-height:53px;color:#000">A...</div>
<!-- EN -->
<div class="a sans" style="left:1101px;top:967px;font-size:17px;line-height:53px;color:#000">EN</div>
<div class="a" style="left:1128px;top:977px;width:1px;height:30px;background:#808080"></div>
<div class="a" style="left:1129px;top:977px;width:1px;height:30px;background:#fff"></div>
<!-- tray -->
<div class="a" style="left:1136px;top:967px;width:141px;height:53px;border-top:1px solid #808080;border-left:1px solid #808080;border-bottom:1px solid #fff;border-right:1px solid #fff"></div>
<svg class="a" style="left:1144px;top:985px" width="12" height="14" viewBox="0 0 12 14"><path d="M2 6 L6 2 L10 6 M2 12 L6 8 L10 12" stroke="#000" stroke-width="2.2" fill="none"/></svg>
<div class="a sans" style="left:1160px;top:971px;width:90px;text-align:center;font-size:17px;line-height:23.5px;color:#000">11:11 PM<br>12/19/2017</div>
<svg class="a" style="left:1251px;top:985px" width="23" height="19" viewBox="0 0 23 19"><defs><linearGradient id="mon" x1="0" y1="0" x2="1" y2="1"><stop offset="0" stop-color="#2a5cc8"/><stop offset="0.5" stop-color="#4a8ae6"/><stop offset="1" stop-color="#6ab0f6"/></linearGradient></defs><rect x="0.5" y="0.5" width="22" height="17.5" fill="url(#mon)" stroke="#8aa0c0" stroke-width="1"/><rect x="5" y="14.5" width="16" height="1.5" fill="#334466"/><rect x="2" y="14" width="2" height="2" fill="#e06020"/></svg>


<!-- ANDROID -->
<div class="a" style="left:831px;top:513px;width:449px;height:450px;background:#d4d0c8;border-top:1px solid #d4d0c8;border-left:1px solid #d4d0c8"></div>
<div class="a" style="left:832px;top:514px;width:448px;height:449px;border-top:1px solid #fff;border-left:1px solid #fff"></div>
<div class="a" style="left:836px;top:518px;width:444px;height:27px;background:linear-gradient(to right,#0a246a 0%,#95b9e2 100%)"></div>
<div class="a sans" style="left:838px;top:518px;font-size:16px;font-weight:bold;line-height:28px;color:#fff;-webkit-text-stroke:0.3px #fff;transform-origin:0 0;transform:scaleX(1.14)">Android Emulator - Nexus_S_API_27:5554</div>
<div class="a" style="left:836px;top:546px;width:444px;height:416px;background:#808080;overflow:hidden">
<svg class="a" style="left:0;top:0" width="444" height="416" viewBox="836 546 444 416">
<defs>
<linearGradient id="pb" x1="0" y1="0" x2="0" y2="1"><stop offset="0" stop-color="#262626"/><stop offset="0.1" stop-color="#1a1a1a"/><stop offset="0.2" stop-color="#0c0c0c"/><stop offset="0.32" stop-color="#020202"/><stop offset="1" stop-color="#000"/></linearGradient>
</defs>
<rect x="884" y="751" width="5" height="116" rx="1" fill="#111"/>
<rect x="1273" y="686" width="4" height="60" rx="1" fill="#111"/>
<path d="M888 1000 V645.0 C888 575.0 915.0 551.0 1000.0 549.0 Q1081.5 546.0 1163.0 549.0 C1248.0 551.0 1275 575.0 1275 645.0 V1000 Z" fill="#000"/>
<path d="M890.6 1000 V646.8 C890.6 577.3 917.3 553.6 1001.8 551.6 Q1081.5 548.6 1161.2 551.6 C1245.7 553.6 1272.4 577.3 1272.4 646.8 V1000 Z" fill="none" stroke="#d0d0d0" stroke-width="1.6"/>
<path d="M900.5 1000 V653.8 C900.5 586.2 926.2 563.5 1008.8 561.5 Q1081.5 558.5 1154.2 561.5 C1236.8 563.5 1262.5 586.2 1262.5 653.8 V1000 Z" fill="none" stroke="#6e6e6e" stroke-width="1"/>
<path d="M901.5 1000 V654.5 C901.5 587.2 927.1 564.5 1009.5 562.5 Q1081.5 559.5 1153.5 562.5 C1235.8 564.5 1261.5 587.2 1261.5 654.5 V1000 Z" fill="url(#pb)"/>
<rect x="1037" y="593" width="89" height="10" rx="5" fill="#2a2a2a" stroke="#3a3a3a" stroke-width="1"/>
<path d="M1041 598 H1122" stroke="#000" stroke-width="2.5" stroke-dasharray="1.5 1.5"/>
<circle cx="970.5" cy="596.5" r="4.5" fill="#22252c"/>
<rect x="983" y="592" width="19" height="9" rx="4.5" fill="#1f232c"/>
<circle cx="988" cy="596.5" r="2.5" fill="#2c3550"/>
<circle cx="1168" cy="595.5" r="6.5" fill="#262930"/>
<circle cx="1168" cy="595.5" r="3" fill="#30343c"/>
</svg>
<!-- screen -->
<div class="a" style="left:81px;top:109px;width:328px;height:307px;background:#fafafa;overflow:hidden">
 <div class="a" style="left:0;top:0;width:328px;height:24px;background:#303f9f"></div>
 <div class="a" style="left:0;top:24px;width:328px;height:58px;background:#3f51b5;box-shadow:0 1px 3px rgba(0,0,0,0.25)"></div>
 <div class="a sans" style="left:16px;top:25px;font-size:20.6px;line-height:58px;color:#fff;-webkit-text-stroke:0.5px #fff">scoper3</div>
 <svg class="a" style="left:9px;top:3px" width="18" height="18" viewBox="0 0 24 24"><path fill="#fff" d="M19.14 12.94c.04-.3.06-.61.06-.94 0-.32-.02-.64-.07-.94l2.03-1.58a.49.49 0 00.12-.61l-1.92-3.32a.49.49 0 00-.59-.22l-2.39.96c-.5-.38-1.03-.7-1.62-.94l-.36-2.54a.48.48 0 00-.48-.41h-3.84c-.24 0-.43.17-.47.41l-.36 2.54c-.59.24-1.13.57-1.62.94l-2.39-.96a.49.49 0 00-.59.22L2.74 8.87c-.12.21-.08.47.12.61l2.03 1.58c-.05.3-.07.62-.07.94s.02.64.07.94l-2.03 1.58a.49.49 0 00-.12.61l1.92 3.32c.12.22.37.29.59.22l2.39-.96c.5.38 1.03.7 1.62.94l.36 2.54c.05.24.24.41.48.41h3.84c.24 0 .44-.17.47-.41l.36-2.54c.59-.24 1.13-.56 1.62-.94l2.39.96c.22.08.47 0 .59-.22l1.92-3.32c.12-.22.07-.47-.12-.61l-2.01-1.58zM12 15.6c-1.98 0-3.6-1.62-3.6-3.6s1.62-3.6 3.6-3.6 3.6 1.62 3.6 3.6-1.62 3.6-3.6 3.6z"/></svg>
 <svg class="a" style="left:36px;top:7px" width="15" height="9" viewBox="0 0 15 9"><g fill="#fff" opacity="0.85"><path d="M0 0.5 H15 M0 3 H15" stroke="#fff" stroke-width="1.2" stroke-dasharray="2 1"/><rect x="0" y="4.5" width="15" height="1.2"/><rect x="3" y="7" width="9" height="1.3"/></g></svg>
 <svg class="a" style="left:245px;top:3px" width="22" height="18" viewBox="0 0 22 18"><path d="M19 4 V17 H6 Z" fill="#fff" opacity="0.45"/><path d="M14 10 V17 H6 Z" fill="#fff"/><text x="1" y="7" font-family="Liberation Sans" font-size="7" font-weight="bold" fill="#fff">LTE</text></svg>
 <svg class="a" style="left:274px;top:4px" width="9" height="16" viewBox="0 0 9 16"><rect x="2.5" y="0" width="4" height="2" fill="#fff"/><rect x="0" y="1.5" width="9" height="14.5" rx="1" fill="#fff"/><path d="M5.5 3 L2.5 9 H4.5 L3.5 13.5 L6.5 7 H4.5 Z" fill="#303f9f"/></svg>
 <div class="a sans" style="left:292px;top:0;font-size:14.5px;line-height:24px;color:#fff;-webkit-text-stroke:0.4px #fff">9:11</div>
 <!-- edit text -->
 <div class="a sans" style="left:14px;top:100px;font-size:19px;line-height:40px;color:#333;letter-spacing:0.5px">/0<span style="margin-left:1px">12</span></div>
 <div class="a" style="left:32px;top:106px;width:2px;height:25px;background:#ff4081"></div>
 <div class="a" style="left:14px;top:132px;width:199px;height:2px;background:#ff4081"></div>
 <!-- send -->
 <div class="a" style="left:232px;top:99px;width:82px;height:37px;background:#d6d7d7;border-radius:2px;box-shadow:0 1px 2px rgba(0,0,0,0.2)"></div>
 <div class="a sans" style="left:232px;top:99px;width:82px;text-align:center;font-size:14.5px;letter-spacing:-0.2px;-webkit-text-stroke:0.45px #2a2a2a;line-height:39px;color:#2a2a2a">SEND</div>
 <!-- nav area -->
 <div class="a" style="left:0;top:287px;width:328px;height:3px;background:linear-gradient(#f4f5f6,#e4e7ea)"></div>
 <div class="a" style="left:0;top:290px;width:328px;height:17px;background:#e4e7ea"></div>
 <div class="a" style="left:-10px;top:302px;width:30px;height:30px;border-radius:50%;background:#fafafa"></div>
 <div class="a" style="left:308px;top:302px;width:6px;height:8px;border-radius:3px;background:#546e7a"></div>
</div>
</div>


</body></html>
